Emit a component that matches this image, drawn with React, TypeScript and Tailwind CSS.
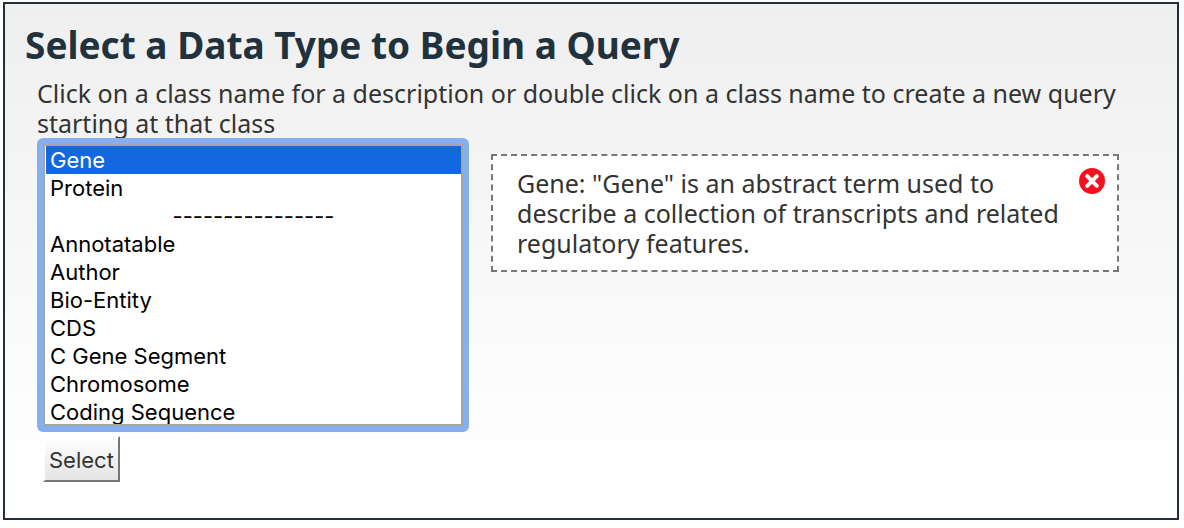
import { useState } from "react";

const descriptions: Record<string, string> = {
  Gene: 'Gene: "Gene" is an abstract term used to describe a collection of transcripts and related regulatory features.',
};

const preferred = ["Gene", "Protein"];

const classes = [
  "Annotatable",
  "Author",
  "Bio-Entity",
  "CDS",
  "C Gene Segment",
  "Chromosome",
  "Coding Sequence",
];

const optionStyle =
  "h-7 px-1 pt-px pb-0 leading-7 text-black checked:bg-linear-to-r checked:from-[#1168df] checked:to-[#1168df] checked:[-webkit-text-fill-color:white]";

function CloseIcon() {
  return (
    <svg viewBox="0 0 26 26" className="size-[26px]" aria-hidden="true">
      <circle cx="13" cy="13" r="13" fill="#f9101f" />
      <path
        d="M8.2 8.2 17.8 17.8M17.8 8.2 8.2 17.8"
        stroke="#fff"
        strokeWidth="4"
        strokeLinecap="round"
      />
    </svg>
  );
}

export default function App() {
  const [selected, setSelected] = useState("Gene");
  const [open, setOpen] = useState(true);

  return (
    <div className="bg-white pt-0.5 pr-[5px] pb-2 pl-[3px] font-['Noto_Sans','Open_Sans',sans-serif] text-[#333]">
      <main className="border-2 border-[#1f2f3d] bg-linear-to-b from-[#efefef] to-white to-90% px-5 pt-4 pb-9">
        <h1 className="text-[37px] leading-[50px] font-bold text-[#1f323d]">
          Select a Data Type to Begin a Query
        </h1>
        <form className="pr-[38px] pl-3" onSubmit={(e) => e.preventDefault()}>
          <label htmlFor="class-list" className="block pt-2 text-[25px] leading-[30px]">
            Click on a class name for a description or double click on a class name to create a new
            query starting at that class
          </label>
          <div className="flex items-start gap-[22px]">
            <div className="shrink-0 rounded-md bg-[#86aff0] p-1.5">
              <select
                id="class-list"
                size={10}
                value={selected}
                onChange={(e) => {
                  setSelected(e.target.value);
                  setOpen(true);
                }}
                className="block h-[282px] w-[420px] overflow-hidden rounded-none border-2 border-[#a5a5a5] bg-white py-0 pr-0 pl-px font-[Inter,sans-serif] text-[22px] outline-none [scrollbar-width:none]"
              >
                {preferred.map((name) => (
                  <option key={name} className={optionStyle}>
                    {name}
                  </option>
                ))}
                <option disabled className="h-7 px-1 pt-px pb-0 text-center leading-7 text-black">
                  ----------------
                </option>
                {classes.map((name) => (
                  <option key={name} className={optionStyle}>
                    {name}
                  </option>
                ))}
              </select>
            </div>
            {open && (
              <section className="mt-4 flex grow items-start justify-between gap-4 border-2 border-dashed border-[#777] bg-white py-3 pr-3 pl-6">
                <p className="text-[25px] leading-[30px]">
                  {descriptions[selected] ?? selected}
                </p>
                <button type="button" aria-label="Close" onClick={() => setOpen(false)}>
                  <CloseIcon />
                </button>
              </section>
            )}
          </div>
          <button
            type="submit"
            className="ml-1.5 mt-1 block border-2 border-t-white border-r-[#777] border-b-[#777] border-l-white bg-linear-to-b from-white to-[#e4e4e4] px-1 pt-[7px] pb-[5px] font-[Inter,sans-serif] text-[22px] leading-[30px]"
          >
            Select
          </button>
        </form>
      </main>
    </div>
  );
}
